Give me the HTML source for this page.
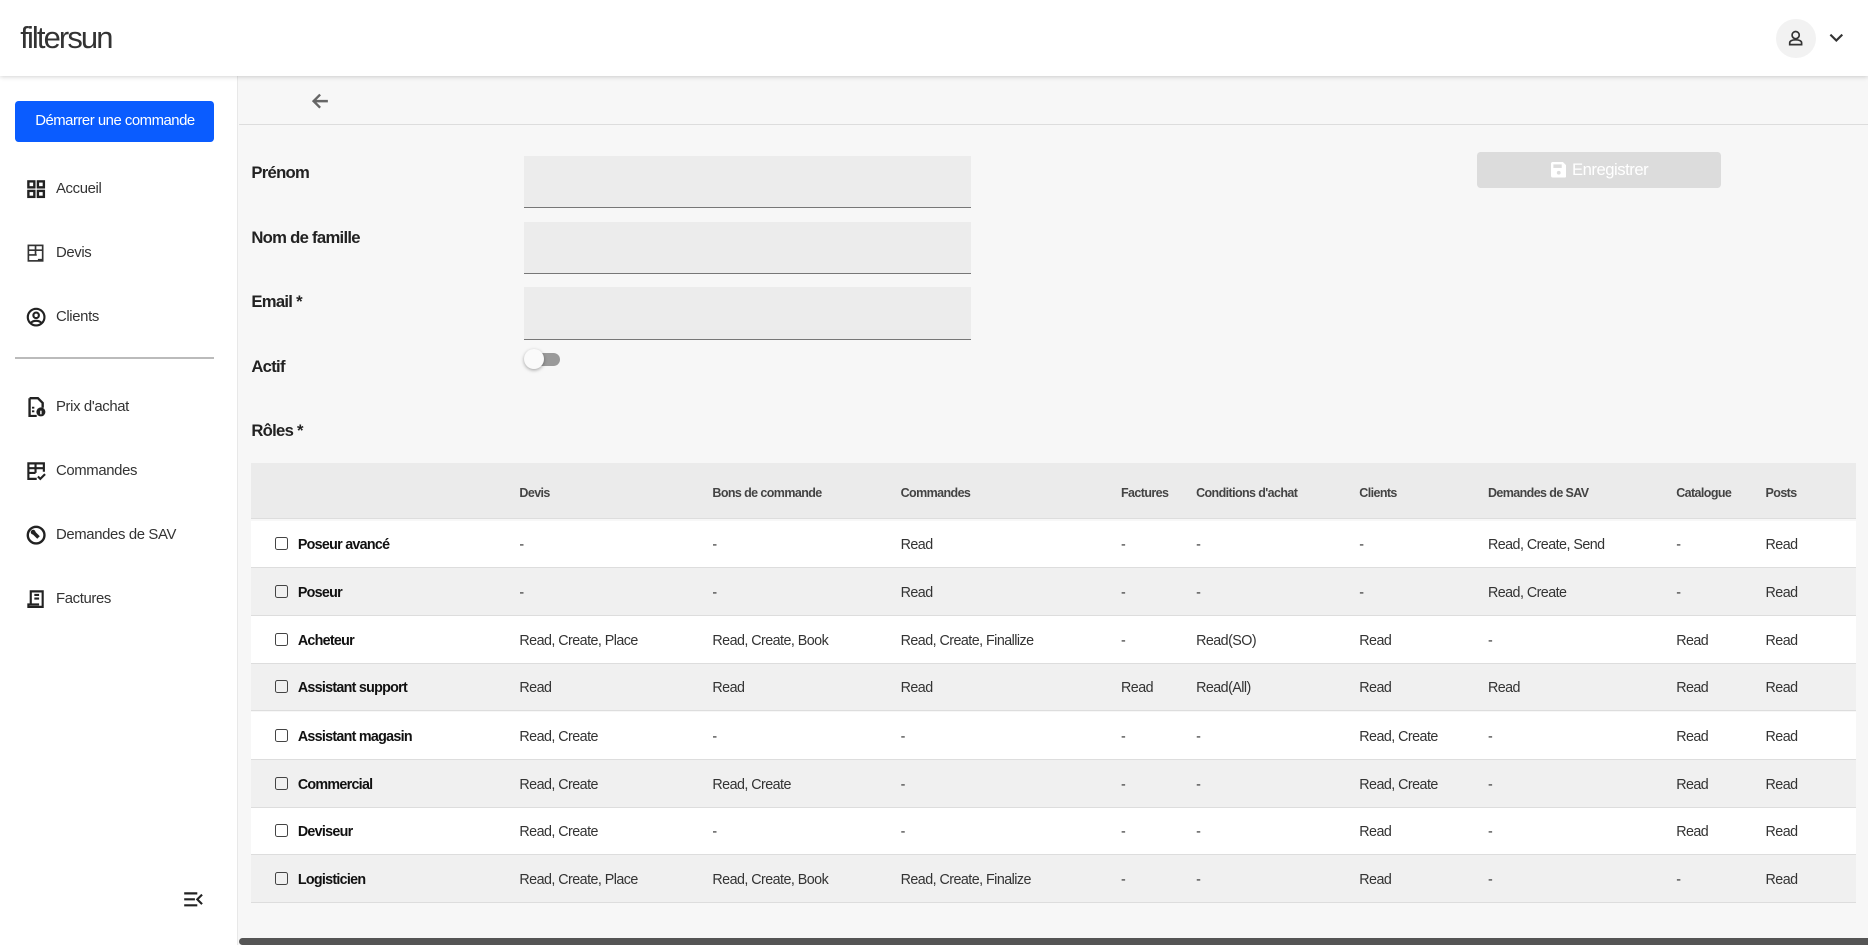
<!DOCTYPE html>
<html><head><meta charset="utf-8">
<style>
html{zoom:1.19133}
*{box-sizing:border-box;margin:0;padding:0}
body{width:1568px;height:793px;overflow:hidden;background:#f7f7f7;font-family:"Liberation Sans",Arial,sans-serif;color:#222;position:relative}
.abs{position:absolute}
#hdr{left:0;top:0;width:1568px;height:64px;background:#fff;box-shadow:0 1px 4px rgba(0,0,0,.2);z-index:5}
#side{left:0;top:64px;width:200px;height:729px;background:#fff;border-right:1px solid #e8e8e8}
.nav{position:absolute;left:22px;display:flex;align-items:center;font-size:12.5px;color:#333;letter-spacing:-0.3px}
.nav svg{width:17px;height:17px;margin-right:8px}
.lbl{position:absolute;left:211px;font-size:14px;font-weight:bold;color:#222;letter-spacing:-0.6px}
.inp{position:absolute;left:440px;width:375px;height:44px;background:#ececec;border-bottom:1px solid #777}
.row{position:absolute;left:211px;width:1347px;height:40px;border-bottom:1px solid #ddd;font-size:12px;color:#333;letter-spacing:-0.45px}
.row span{position:absolute;top:14px;white-space:nowrap}
.row .n{left:39px;font-weight:bold;color:#111;letter-spacing:-0.6px}
.cb{position:absolute;left:20px;top:14px;width:11px;height:11px;border:1px solid #444;border-radius:2px}
.th{position:absolute;top:19px;font-size:10.5px;font-weight:bold;color:#444;white-space:nowrap;letter-spacing:-0.5px}
</style></head><body>
<div id="hdr" class="abs">
  <div class="abs" style="left:17px;top:17px;font-size:26px;color:#333;letter-spacing:-1.6px">filtersun</div>
  <div class="abs" style="left:1491px;top:16px;width:33px;height:33px;border-radius:50%;background:#f2f2f2">
    <svg width="33" height="33" viewBox="0 0 33 33"><circle cx="16.5" cy="13.5" r="3" fill="none" stroke="#333" stroke-width="1.4"/><path d="M11.5 21.5v-1.5c0-1.5 2-2.5 5-2.5s5 1 5 2.5v1.5z" fill="none" stroke="#333" stroke-width="1.4"/></svg>
  </div>
  <svg class="abs" style="left:1534px;top:26px" width="14" height="12" viewBox="0 0 14 12"><path d="M2 3l5 5 5-5" fill="none" stroke="#333" stroke-width="1.8"/></svg>
</div>
<div id="side" class="abs">
  <div class="abs" style="left:13px;top:21px;width:167px;height:34px;background:#0a5cff;border-radius:3px;color:#fff;font-size:12.5px;letter-spacing:-0.4px;text-align:center;line-height:34px">Démarrer une commande</div>
  <div class="nav" style="top:86px"><svg viewBox="0 0 17 17"><g fill="none" stroke="#222" stroke-width="2"><rect x="2" y="2" width="5" height="5"/><rect x="10" y="2" width="5" height="5"/><rect x="2" y="10" width="5" height="5"/><rect x="10" y="10" width="5" height="5"/></g></svg>Accueil</div>
  <div class="nav" style="top:140px"><svg viewBox="0 0 17 17"><g fill="none" stroke="#333" stroke-width="1.4"><rect x="2" y="2" width="12" height="13"/><path d="M2 6h12M2 10h7M8 2v8M10 14h4"/></g></svg>Devis</div>
  <div class="nav" style="top:194px"><svg viewBox="0 0 17 17"><g fill="none" stroke="#222" stroke-width="1.8"><circle cx="8.5" cy="8.5" r="7"/><circle cx="8.5" cy="7" r="2.3"/><path d="M4 13.5c2-2.5 7-2.5 9 0"/></g></svg>Clients</div>
  <div class="abs" style="left:13px;top:236px;width:167px;height:1px;background:#bbb"></div>
  <div class="nav" style="top:269px"><svg viewBox="0 0 17 17"><path d="M3 1h7l4 4v4" fill="none" stroke="#222" stroke-width="2"/><path d="M3 1v15h6" fill="none" stroke="#222" stroke-width="2"/><path d="M5 9h2M5 12h2" stroke="#222" stroke-width="1.6"/><circle cx="12.5" cy="12.5" r="3.8" fill="#222"/><path d="M12.5 11.5v3" stroke="#fff" stroke-width="1.2"/></svg>Prix d'achat</div>
  <div class="nav" style="top:323px"><svg viewBox="0 0 17 17"><g fill="none" stroke="#222" stroke-width="1.8"><path d="M9 15H2V2h13v7"/><path d="M2 6h13M2 10h6M8 2v8"/><path d="M10 13l2 2 4-4"/></g></svg>Commandes</div>
  <div class="nav" style="top:377px"><svg viewBox="0 0 17 17"><circle cx="8.5" cy="8.5" r="7" fill="none" stroke="#222" stroke-width="2"/><path d="M5.5 5.5l5 5" stroke="#222" stroke-width="3"/><circle cx="6" cy="6" r="2" fill="#222"/></svg>Demandes de SAV</div>
  <div class="nav" style="top:430px"><svg viewBox="0 0 17 17"><g fill="none" stroke="#222" stroke-width="1.8"><path d="M4 13V2h10v13H2v-2h9"/><path d="M7 5h4M7 8h4"/></g></svg>Factures</div>
  <svg class="abs" style="left:154px;top:684px" width="18" height="14" viewBox="0 0 18 14"><path d="M1 2h11M1 7h9M1 12h11M16 3l-4 4 4 4" fill="none" stroke="#222" stroke-width="1.8"/></svg>
</div>
<svg class="abs" style="left:260px;top:76px" width="17" height="17" viewBox="0 0 17 17"><path d="M15 8.5H3M8.5 3l-5.5 5.5 5.5 5.5" fill="none" stroke="#666" stroke-width="2"/></svg>
<div class="abs" style="left:201px;top:104px;width:1367px;height:1px;background:#ddd"></div>

<div class="lbl" style="top:137px">Prénom</div>
<div class="lbl" style="top:191px">Nom de famille</div>
<div class="lbl" style="top:245px">Email *</div>
<div class="lbl" style="top:300px">Actif</div>
<div class="lbl" style="top:353px">Rôles *</div>
<div class="inp" style="top:131px"></div>
<div class="inp" style="top:186px"></div>
<div class="inp" style="top:241px"></div>
<div class="abs" style="left:449px;top:296px;width:21px;height:11px;border-radius:6px;background:#9a9a9a"></div>
<div class="abs" style="left:440px;top:293px;width:17px;height:17px;border-radius:50%;background:#fafafa;box-shadow:0 1px 3px rgba(0,0,0,.35)"></div>

<div class="abs" style="left:1240px;top:128px;width:205px;height:30px;background:#dcdcdc;border-radius:3px;color:#fff;font-size:14px;letter-spacing:-0.4px;text-align:center;line-height:31px">
<svg style="vertical-align:-2px;margin-right:5px" width="13" height="13" viewBox="0 0 13 13"><path d="M0 1.5A1.5 1.5 0 0 1 1.5 0H10l3 3v8.5A1.5 1.5 0 0 1 11.5 13h-10A1.5 1.5 0 0 1 0 11.5z" fill="#fff"/><rect x="2" y="2" width="7" height="3" fill="#dcdcdc"/><circle cx="6.5" cy="9" r="1.6" fill="#dcdcdc"/></svg>Enregistrer</div>

<div class="abs" style="left:211px;top:389px;width:1347px;height:47px;background:#ebebeb;border-bottom:1px solid #ddd">
  <div class="th" style="left:225px">Devis</div><div class="th" style="left:387px">Bons de commande</div><div class="th" style="left:545px">Commandes</div><div class="th" style="left:730px">Factures</div><div class="th" style="left:793px">Conditions d'achat</div><div class="th" style="left:930px">Clients</div><div class="th" style="left:1038px">Demandes de SAV</div><div class="th" style="left:1196px">Catalogue</div><div class="th" style="left:1271px">Posts</div>
</div>

<div class="row" style="top:437px;background:#fff"><i class="cb"></i><span class="n">Poseur avancé</span><span style="left:225px">-</span><span style="left:387px">-</span><span style="left:545px">Read</span><span style="left:730px">-</span><span style="left:793px">-</span><span style="left:930px">-</span><span style="left:1038px">Read, Create, Send</span><span style="left:1196px">-</span><span style="left:1271px">Read</span></div>
<div class="row" style="top:477px;background:#f0f0f0"><i class="cb"></i><span class="n">Poseur</span><span style="left:225px">-</span><span style="left:387px">-</span><span style="left:545px">Read</span><span style="left:730px">-</span><span style="left:793px">-</span><span style="left:930px">-</span><span style="left:1038px">Read, Create</span><span style="left:1196px">-</span><span style="left:1271px">Read</span></div>
<div class="row" style="top:517px;background:#fff"><i class="cb"></i><span class="n">Acheteur</span><span style="left:225px">Read, Create, Place</span><span style="left:387px">Read, Create, Book</span><span style="left:545px">Read, Create, Finallize</span><span style="left:730px">-</span><span style="left:793px">Read(SO)</span><span style="left:930px">Read</span><span style="left:1038px">-</span><span style="left:1196px">Read</span><span style="left:1271px">Read</span></div>
<div class="row" style="top:557px;background:#f0f0f0"><i class="cb"></i><span class="n">Assistant support</span><span style="left:225px">Read</span><span style="left:387px">Read</span><span style="left:545px">Read</span><span style="left:730px">Read</span><span style="left:793px">Read(All)</span><span style="left:930px">Read</span><span style="left:1038px">Read</span><span style="left:1196px">Read</span><span style="left:1271px">Read</span></div>
<div class="row" style="top:598px;background:#fff"><i class="cb"></i><span class="n">Assistant magasin</span><span style="left:225px">Read, Create</span><span style="left:387px">-</span><span style="left:545px">-</span><span style="left:730px">-</span><span style="left:793px">-</span><span style="left:930px">Read, Create</span><span style="left:1038px">-</span><span style="left:1196px">Read</span><span style="left:1271px">Read</span></div>
<div class="row" style="top:638px;background:#f0f0f0"><i class="cb"></i><span class="n">Commercial</span><span style="left:225px">Read, Create</span><span style="left:387px">Read, Create</span><span style="left:545px">-</span><span style="left:730px">-</span><span style="left:793px">-</span><span style="left:930px">Read, Create</span><span style="left:1038px">-</span><span style="left:1196px">Read</span><span style="left:1271px">Read</span></div>
<div class="row" style="top:678px;background:#fff"><i class="cb"></i><span class="n">Deviseur</span><span style="left:225px">Read, Create</span><span style="left:387px">-</span><span style="left:545px">-</span><span style="left:730px">-</span><span style="left:793px">-</span><span style="left:930px">Read</span><span style="left:1038px">-</span><span style="left:1196px">Read</span><span style="left:1271px">Read</span></div>
<div class="row" style="top:718px;background:#f0f0f0"><i class="cb"></i><span class="n">Logisticien</span><span style="left:225px">Read, Create, Place</span><span style="left:387px">Read, Create, Book</span><span style="left:545px">Read, Create, Finalize</span><span style="left:730px">-</span><span style="left:793px">-</span><span style="left:930px">Read</span><span style="left:1038px">-</span><span style="left:1196px">-</span><span style="left:1271px">Read</span></div>

<div class="abs" style="left:201px;top:787px;width:1367px;height:6px;background:#555;border-radius:3px 0 0 3px"></div>
</body></html>
